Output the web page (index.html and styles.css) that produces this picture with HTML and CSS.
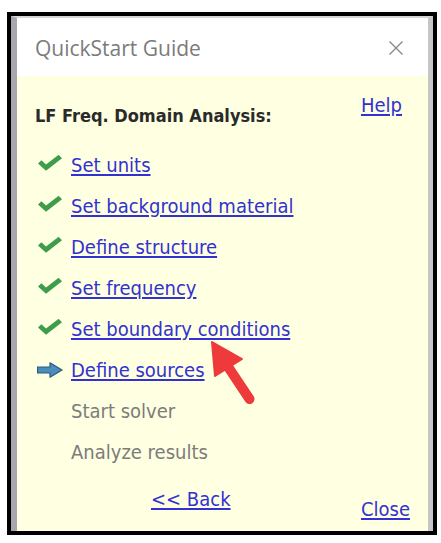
FILE: index.html
```html
<!DOCTYPE html>
<html>
<head>
<meta charset="utf-8">
<link rel="stylesheet" href="styles.css">
</head>
<body>
<div class="frame">
  <div class="window">
    <div class="titlebar">
      <span class="title">QuickStart Guide</span>
      <svg class="close-x" width="16" height="16" viewBox="0 0 16 16"><path d="M1.5 1.5 L14.5 14.5 M14.5 1.5 L1.5 14.5" stroke="#8a8a8a" stroke-width="1.4" fill="none"/></svg>
    </div>
    <div class="content">
      <div class="header">
        <span class="heading">LF Freq. Domain Analysis:</span>
        <a class="link help" href="#">Help</a>
      </div>
      <ul class="steps">
        <li class="step"><svg class="icon" width="24" height="16" viewBox="0 0 24 16"><path d="M0 8.5 L3.4 5.2 L8 9.6 L20.6 -0.2 L24 3.2 L8 15.8 Z" fill="#3e9c4a"/></svg><a class="link" href="#">Set units</a></li>
        <li class="step"><svg class="icon" width="24" height="16" viewBox="0 0 24 16"><path d="M0 8.5 L3.4 5.2 L8 9.6 L20.6 -0.2 L24 3.2 L8 15.8 Z" fill="#3e9c4a"/></svg><a class="link" href="#">Set background material</a></li>
        <li class="step"><svg class="icon" width="24" height="16" viewBox="0 0 24 16"><path d="M0 8.5 L3.4 5.2 L8 9.6 L20.6 -0.2 L24 3.2 L8 15.8 Z" fill="#3e9c4a"/></svg><a class="link" href="#">Define structure</a></li>
        <li class="step"><svg class="icon" width="24" height="16" viewBox="0 0 24 16"><path d="M0 8.5 L3.4 5.2 L8 9.6 L20.6 -0.2 L24 3.2 L8 15.8 Z" fill="#3e9c4a"/></svg><a class="link" href="#">Set frequency</a></li>
        <li class="step"><svg class="icon" width="24" height="16" viewBox="0 0 24 16"><path d="M0 8.5 L3.4 5.2 L8 9.6 L20.6 -0.2 L24 3.2 L8 15.8 Z" fill="#3e9c4a"/></svg><a class="link" href="#">Set boundary conditions</a></li>
        <li class="step"><svg class="icon arrow" width="26" height="16" viewBox="0 0 26 16"><path d="M0.5 5 L13 5 L13 0.8 L25 8 L13 15.2 L13 11 L0.5 11 Z" fill="#4a8cba" stroke="#2b5a80" stroke-width="1.2" stroke-linejoin="round"/></svg><a class="link" href="#">Define sources</a></li>
        <li class="step"><span class="icon-space"></span><span class="pending">Start solver</span></li>
        <li class="step"><span class="icon-space"></span><span class="pending">Analyze results</span></li>
      </ul>
      <div class="footer">
        <a class="link back" href="#">&lt;&lt; Back</a>
        <a class="link close" href="#">Close</a>
      </div>
      <svg class="pointer" width="66" height="76" viewBox="0 0 66 76"><path d="M28.5 32.5 L49.5 64" stroke="#ee3a3a" stroke-width="10" stroke-linecap="round" fill="none"/><path d="M12 7 L42 24 L15 41 Z" fill="#ee3a3a" stroke="#ee3a3a" stroke-width="2" stroke-linejoin="round"/></svg>
    </div>
  </div>
</div>
</body>
</html>
```
FILE: styles.css
```css
html, body {
  margin: 0;
  padding: 0;
  background: #ffffff;
}

.frame {
  box-sizing: border-box;
  margin: 12px 0 0 7px;
  width: 430px;
  height: 523px;
  border: 4px solid #000000;
}

.window {
  box-sizing: border-box;
  height: 100%;
  display: flex;
  flex-direction: column;
  border-left: 6px solid #a7a7af;
  border-right: 5px solid #c6c6c6;
  border-top: 2px solid #d6d6d6;
}

.titlebar {
  height: 58px;
  flex: 0 0 58px;
  background: #ffffff;
  display: flex;
  align-items: center;
  justify-content: space-between;
  padding: 2px 24px 0 18px;
  box-sizing: border-box;
}

.title {
  font-family: "Open Sans", sans-serif;
  font-size: 21px;
  color: #7b7b7b;
  line-height: 24px;
}

.close-x {
  display: block;
}

.content {
  position: relative;
  flex: 1;
  background: #ffffe1;
  padding: 17px 18px 0 18px;
  font-family: "DejaVu Sans Condensed", "DejaVu Sans", sans-serif;
  font-size: 20px;
  line-height: 24px;
}

.header {
  display: flex;
  justify-content: space-between;
  align-items: flex-start;
}

.heading {
  margin-top: 12px;
  font-weight: bold;
  font-size: 18px;
  line-height: 22px;
  color: #2a2a2a;
}

.link {
  color: #3232d2;
  text-decoration: underline;
  text-underline-offset: 2px;
}

.help {
  margin-right: 8px;
}

.steps {
  list-style: none;
  margin: 26px 0 0 0;
  padding: 0 0 0 3px;
  display: flex;
  flex-direction: column;
  gap: 17px;
}

.step {
  display: flex;
  align-items: center;
  gap: 9px;
  height: 24px;
}

.icon {
  display: block;
  flex: 0 0 auto;
  margin-top: -4px;
}

.icon.arrow {
  margin-left: -1px;
  margin-right: -1px;
  margin-top: 0;
}

.icon-space {
  display: block;
  width: 24px;
  flex: 0 0 24px;
}

.pending {
  color: #7c7c7c;
}

.footer {
  display: flex;
  justify-content: space-between;
  align-items: flex-start;
  margin-top: 23px;
}

.back {
  margin-left: 116px;
}

.close {
  margin-top: 10px;
}

.pointer {
  position: absolute;
  left: 183px;
  top: 259px;
}
```
